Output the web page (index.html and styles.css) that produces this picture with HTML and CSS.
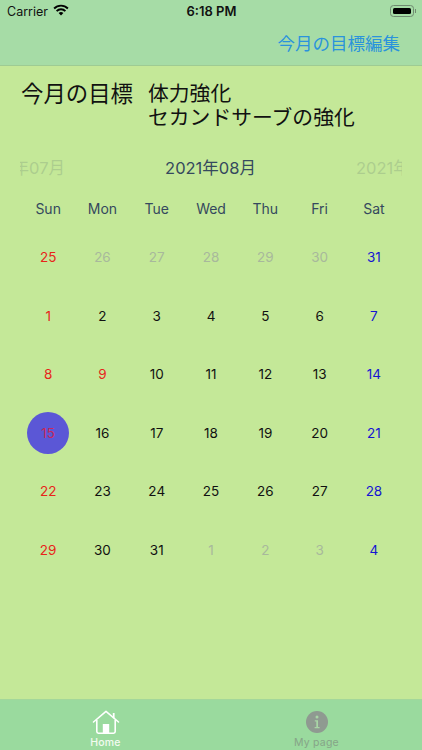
FILE: index.html
```html
<!DOCTYPE html>
<html lang="ja">
<head>
<meta charset="utf-8">
<title>今月の目標</title>
<link rel="stylesheet" href="styles.css">
</head>
<body>
<div class="app">
  <header class="top">
    <div class="status">
      <div class="status-left">
        <span>Carrier</span>
        <svg class="wifi" viewBox="0 0 16 12" width="16" height="12"><path d="M8 11.6 5.6 9.1a3.4 3.4 0 0 1 4.8 0z" fill="#000"/><path d="M3.6 7.1a6.2 6.2 0 0 1 8.8 0" fill="none" stroke="#000" stroke-width="1.9"/><path d="M1.1 4.5a9.8 9.8 0 0 1 13.8 0" fill="none" stroke="#000" stroke-width="1.9"/></svg>
      </div>
      <span class="clock">6:18 PM</span>
      <div class="status-right">
        <span class="battery"><span class="battery-fill"></span></span><span class="battery-tip"></span>
      </div>
    </div>
    <div class="nav"><span class="nav-btn">今月の目標編集</span></div>
  </header>
  <main class="content">
    <section class="goal">
      <div class="goal-label">今月の目標</div>
      <div class="goal-text">
        <div class="goal-line">体力強化</div>
        <div class="goal-line">セカンドサーブの強化</div>
      </div>
    </section>
    <section class="months">
      <div class="month side prev"><span>2021年07月</span></div>
      <div class="month current">2021年08月</div>
      <div class="month side next"><span>2021年09月</span></div>
    </section>
    <section class="calendar">
      <div class="dow">Sun</div><div class="dow">Mon</div><div class="dow">Tue</div><div class="dow">Wed</div><div class="dow">Thu</div><div class="dow">Fri</div><div class="dow">Sat</div>
      <div class="day red">25</div><div class="day muted">26</div><div class="day muted">27</div><div class="day muted">28</div><div class="day muted">29</div><div class="day muted">30</div><div class="day blue">31</div>
      <div class="day red">1</div><div class="day">2</div><div class="day">3</div><div class="day">4</div><div class="day">5</div><div class="day">6</div><div class="day blue">7</div>
      <div class="day red">8</div><div class="day red">9</div><div class="day">10</div><div class="day">11</div><div class="day">12</div><div class="day">13</div><div class="day blue">14</div>
      <div class="day red"><span class="today">15</span></div><div class="day">16</div><div class="day">17</div><div class="day">18</div><div class="day">19</div><div class="day">20</div><div class="day blue">21</div>
      <div class="day red">22</div><div class="day">23</div><div class="day">24</div><div class="day">25</div><div class="day">26</div><div class="day">27</div><div class="day blue">28</div>
      <div class="day red">29</div><div class="day">30</div><div class="day">31</div><div class="day muted">1</div><div class="day muted">2</div><div class="day muted">3</div><div class="day blue">4</div>
    </section>
  </main>
  <nav class="tabs">
    <div class="tab active">
      <svg viewBox="0 0 28 24" width="28" height="24"><path d="M1.5 12 14 1.3 26.5 12" fill="none" stroke="#fff" stroke-width="1.6" stroke-linecap="round" stroke-linejoin="round"/><path d="M21.7 3v5.2" fill="none" stroke="#fff" stroke-width="1.8"/><path d="M4.8 10v11.6a1.6 1.6 0 0 0 1.6 1.6h15.2a1.6 1.6 0 0 0 1.6-1.6V10" fill="none" stroke="#fff" stroke-width="1.6"/><rect x="10.8" y="14" width="6.4" height="9" fill="#fff"/></svg>
      <span>Home</span>
    </div>
    <div class="tab">
      <svg viewBox="0 0 22 22" width="22" height="22"><circle cx="11" cy="11" r="11" fill="#8f9a91"/><circle cx="11" cy="6" r="1.5" fill="#a9d6a6"/><path d="M8.8 9.3h3.2v6.6h1.6v1.3H8.6v-1.3h1.7v-5.3H8.8z" fill="#a9d6a6"/></svg>
      <span>My page</span>
    </div>
  </nav>
</div>
</body>
</html>
```

FILE: styles.css
```css
* { box-sizing: border-box; }
html, body { margin: 0; padding: 0; }
body {
  width: 422px;
  height: 750px;
  overflow: hidden;
  font-family: Inter, Roboto, "Noto Sans CJK JP", sans-serif;
  background: #c4e898;
}
.app {
  display: flex;
  flex-direction: column;
  width: 422px;
  height: 750px;
}
.top {
  height: 66px;
  flex: none;
  background: #a6dca6;
  border-bottom: 1px solid #9ecb93;
}
.status {
  height: 21px;
  padding: 1px 6px 0 7px;
  display: grid;
  grid-template-columns: 1fr auto 1fr;
  align-items: center;
  font-size: 12.5px;
  color: #111;
}
.status-left { display: flex; align-items: center; gap: 5px; }
.wifi { margin-top: -2px; }
.clock { font-weight: 600; font-size: 13px; }
.status-right { display: flex; justify-content: flex-end; align-items: center; }
.battery {
  width: 24px;
  height: 12px;
  padding: 2px;
  border: 1px solid #6f8a70;
  border-radius: 3.5px;
  display: block;
}
.battery-fill { display: block; height: 100%; background: #000; border-radius: 1.5px; }
.battery-tip { width: 1.5px; height: 4px; margin-left: 1px; background: #6f8a70; }
.nav {
  height: 44px;
  padding: 0 22px 2px 0;
  display: flex;
  justify-content: flex-end;
  align-items: center;
}
.nav-btn {
  font-family: "Noto Sans CJK JP", sans-serif;
  font-size: 17.5px;
  color: #2a93dc;
}
.content { flex: 1; min-height: 0; }
.goal {
  display: flex;
  padding: 14px 0 0 21px;
  color: #111;
  font-family: "Noto Sans CJK JP", sans-serif;
}
.goal-label { width: 127px; font-size: 22.4px; line-height: 24px; white-space: nowrap; }
.goal-text { font-size: 20.8px; }
.goal-line { height: 24px; line-height: 24px; white-space: nowrap; }
.months {
  display: grid;
  grid-template-columns: 45px 1fr 46px;
  align-items: center;
  margin: 27px 20px 0;
  height: 24px;
  font-size: 16.5px;
  font-family: Inter, "Noto Sans CJK JP", sans-serif;
}
.month { white-space: nowrap; overflow: hidden; }
.current { text-align: center; color: #35495e; }
.side { color: #35495e; opacity: 0.16; display: flex; }
.prev { justify-content: flex-end; }
.next { justify-content: flex-start; }
.side span { flex: none; }
.calendar {
  display: grid;
  grid-template-columns: repeat(7, 54.3px);
  grid-template-rows: 49px;
  grid-auto-rows: 58.5px;
  padding: 0 0 0 21px;
  font-size: 13.5px;
}
.dow {
  color: #35495e;
  text-align: center;
  padding-top: 21px;
  line-height: 18px;
  font-size: 14px;
}
.day {
  display: flex;
  align-items: center;
  justify-content: center;
  color: #111;
}
.red { color: #e8241a; }
.blue { color: #1414d2; }
.muted { color: #a8b89c; }
.today {
  width: 42px;
  height: 42px;
  border-radius: 50%;
  background: #5b57d6;
  color: #c8285a;
  display: flex;
  align-items: center;
  justify-content: center;
}
.tabs {
  height: 51px;
  flex: none;
  background: #9ada9e;
  border-top: 1px solid #a3d79a;
  display: grid;
  grid-template-columns: 1fr 1fr;
}
.tab {
  display: flex;
  flex-direction: column;
  align-items: center;
  padding-top: 10px;
  color: #86a488;
  font-size: 10.5px;
  letter-spacing: 0.2px;
}
.tab svg { display: block; height: 24px; }
.tab span { margin-top: 2px; line-height: 13px; }
.active { color: #f2fbef; font-weight: 500; }
```
